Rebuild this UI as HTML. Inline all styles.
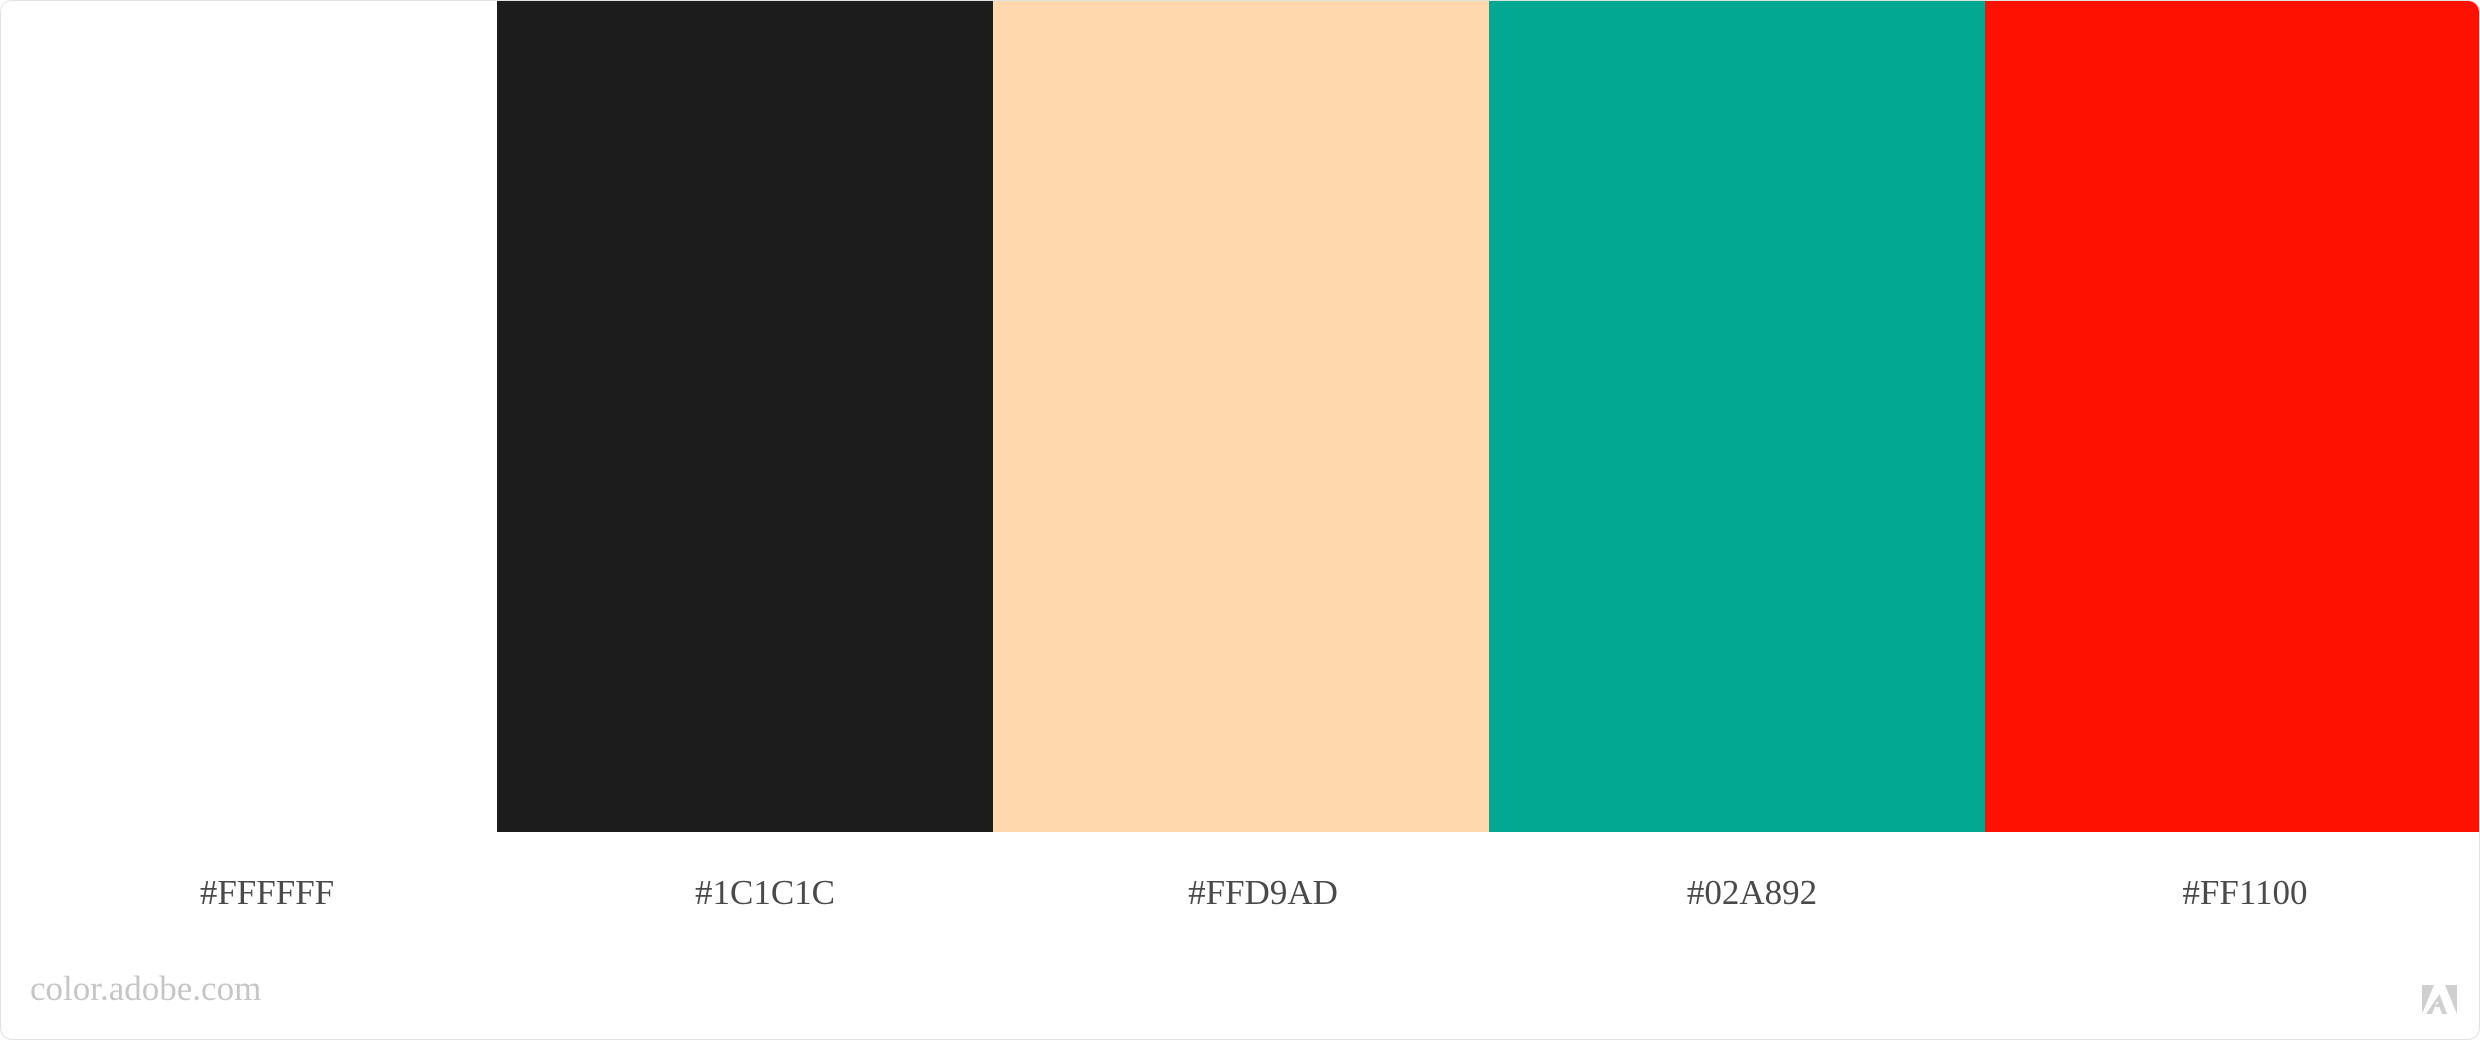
<!DOCTYPE html>
<html><head><style>
html,body{margin:0;padding:0;width:2480px;height:1040px;background:#fff;overflow:hidden}
.card{position:absolute;left:0;top:0;width:2478px;height:1038px;border:1px solid #e2e2e2;border-radius:12px;overflow:hidden;background:#fff}
.sw{position:absolute;top:0;height:831px}
.lbl{position:absolute;top:872px;width:496px;text-align:center;font-family:"Liberation Serif",serif;font-size:35px;color:#4a4a4a}
.site{position:absolute;left:29px;top:968px;font-family:"Liberation Serif",serif;font-size:35px;color:#c6c6c6}
</style></head><body>
<div class="card">
<div class="sw" style="left:0;width:496px;background:#fff"></div>
<div class="sw" style="left:496px;width:496px;background:#1c1c1c"></div>
<div class="sw" style="left:992px;width:496px;background:#ffd9ad"></div>
<div class="sw" style="left:1488px;width:496px;background:#02a892"></div>
<div class="sw" style="left:1984px;width:496px;background:#ff1100"></div>
<div class="lbl" style="left:18px">#FFFFFF</div>
<div class="lbl" style="left:516px">#1C1C1C</div>
<div class="lbl" style="left:1014px">#FFD9AD</div>
<div class="lbl" style="left:1503px">#02A892</div>
<div class="lbl" style="left:1996px">#FF1100</div>
<div class="site">color.adobe.com</div>
<svg style="position:absolute;left:2421px;top:984px" width="36" height="30" viewBox="0 0 36 30">
<polygon points="0,0 12,0 0,29" fill="#cfcfcf"/>
<polygon points="23,0 35,0 35,29" fill="#cfcfcf"/>
<polygon points="17.5,9 25,29 20,29 17.5,22 12,22 17,17 14,17" fill="#cfcfcf"/>
<polygon points="17.5,9 10,29 4,29" fill="#cfcfcf"/>
</svg>
</div>
</body></html>
